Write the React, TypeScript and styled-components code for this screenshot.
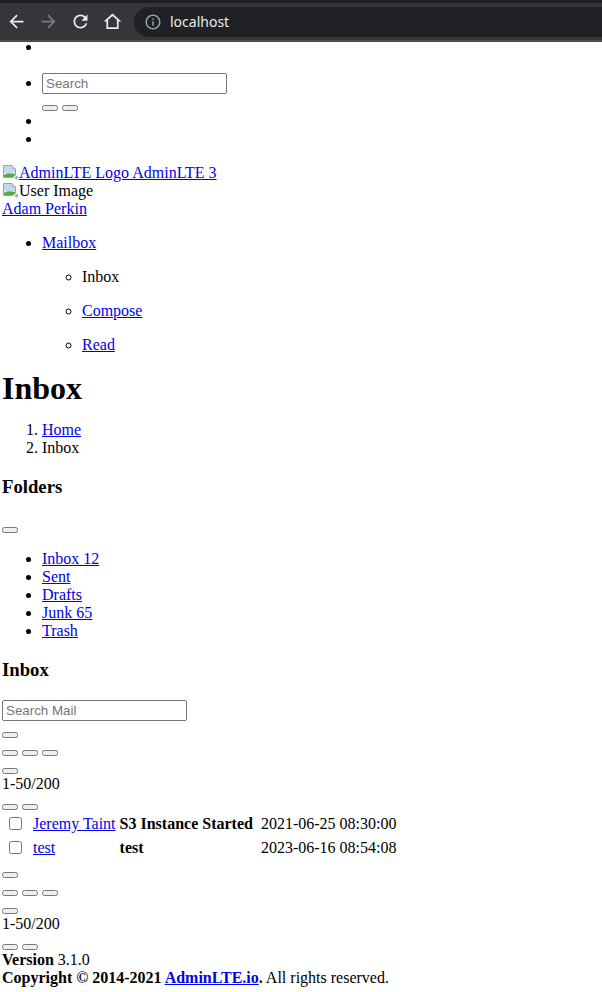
import React from "react";
import styled, { createGlobalStyle } from "styled-components";

const GlobalStyle = createGlobalStyle`
  html, body { margin: 0; padding: 0; background: #ffffff; }
  body {
    font-family: "Liberation Serif", "Times New Roman", serif;
    font-size: 16px;
    color: #000000;
    overflow: hidden;
  }
`;

const Shell = styled.div`
  display: flex;
  flex-direction: column;
  width: 602px;
  height: 992px;
  overflow: hidden;
`;

/* ---------- browser chrome ---------- */
const ChromeFrame = styled.header`
  flex: none;
  background: #1e1f22;
  padding-top: 3px;
`;

const Toolbar = styled.div`
  height: 37px;
  background: #35363a;
  border-bottom: 2px solid #4a4c50;
  display: flex;
  align-items: center;
`;

const NavButton = styled.span<{ $dim?: boolean }>`
  flex: none;
  width: 32px;
  height: 32px;
  display: flex;
  align-items: center;
  justify-content: center;
  color: ${(p) => (p.$dim ? "#7a7b7e" : "#e8eaed")};
`;

const Omnibox = styled.div`
  flex: 1;
  margin-left: 6px;
  margin-right: -30px;
  height: 30px;
  border-radius: 15px;
  background: #202124;
  display: flex;
  align-items: center;
  gap: 8px;
  padding-left: 10px;
  font-family: "Noto Sans", "DejaVu Sans", sans-serif;
  font-size: 14px;
  color: #e8eaed;
`;

const InfoIcon = styled.span`
  display: flex;
  color: #9aa0a6;
`;

/* ---------- page ---------- */
const Viewport = styled.main`
  flex: 1;
  overflow: hidden;
`;

const Page = styled.div<{ $scroll: number }>`
  margin-top: ${(p) => -p.$scroll}px;
  padding: 0 2px;
`;

const Link = styled.a`
  color: #0000ee;
  text-decoration: underline;
  cursor: pointer;
`;

const BulletList = styled.ul<{ $gap?: number }>`
  margin: ${(p) => (p.$gap ?? 16)}px 0;
  padding-left: 40px;
  list-style: disc;
`;

const SubList = styled.ul`
  margin: 0;
  padding-left: 40px;
  list-style: circle;
`;

const EmptyItem = styled.li`
  height: 18px;
`;

const SearchItem = styled.li`
  padding-top: 17px;
`;

const TextInput = styled.input<{ $w: number }>`
  width: ${(p) => p.$w}px;
  box-sizing: border-box;
  font-family: "Liberation Sans", Arial, sans-serif;
  font-size: 13.333px;
  margin: 0;
`;

const Line = styled.div`
  line-height: normal;
`;

const Button = styled.button``;

const Brand = styled.div`
  line-height: normal;
`;

const AltImage = styled.span`
  display: inline;
`;

const BrokenIcon = styled.svg`
  width: 16px;
  height: 16px;
  margin-right: 1px;
  vertical-align: -2px;
`;

const MenuText = styled.p`
  margin: 16px 0;
`;

const PageTitle = styled.h1`
  font-size: 32px;
  font-weight: bold;
  margin: 16px 0 14px;
`;

const Crumbs = styled.ol`
  margin: 0 0 16px;
  padding-left: 40px;
`;

const CardTitle = styled.h3`
  font-size: 18.72px;
  font-weight: bold;
  margin: 18.72px 0;
`;

const MailTable = styled.table`
  border-spacing: 2px;
  border-collapse: separate;
`;

const Cell = styled.td`
  padding: 1px;
  white-space: nowrap;
`;

const Subject = styled.b``;

const Check = styled.input``;

const Footer = styled.footer`
  line-height: normal;
`;

/* ---------- icons ---------- */
const Broken = () => (
  <BrokenIcon viewBox="0 0 16 16" aria-hidden="true">
    <path d="M1.5 1.5 H10 L13.5 5 V11 L11 13.5 H1.5 Z" fill="#eef2f6" stroke="#a0a0a0" strokeWidth="1" />
    <path d="M10 1.5 V5 H13.5" fill="#dcdcdc" stroke="#a0a0a0" strokeWidth="1" />
    <path d="M2 2 H9.5 V5.5 H13 V9 L2 9 Z" fill="#c4d9ee" />
    <path d="M2 13 V11 C5 8.5 8.5 9 13 10 V11 L11 13 Z" fill="#53ad3f" />
    <path d="M12.5 14 L15.5 11.5 V14.5 H12.5 Z" fill="#5b8fd6" />
    <path d="M13.8 15.5 L15.5 14 V15.5 Z" fill="#53ad3f" />
  </BrokenIcon>
);

const BackIcon = () => (
  <svg width="21" height="21" viewBox="0 0 24 24" fill="currentColor">
    <path d="M20 11H7.83l5.59-5.59L12 4l-8 8 8 8 1.41-1.41L7.83 13H20v-2z" />
  </svg>
);
const ForwardIcon = () => (
  <svg width="21" height="21" viewBox="0 0 24 24" fill="currentColor">
    <path d="M12 4l-1.41 1.41L16.17 11H4v2h12.17l-5.58 5.59L12 20l8-8z" />
  </svg>
);
const ReloadIcon = () => (
  <svg width="21" height="21" viewBox="0 0 24 24" fill="currentColor">
    <path d="M17.65 6.35C16.2 4.9 14.21 4 12 4c-4.42 0-7.99 3.58-7.99 8s3.57 8 7.99 8c3.73 0 6.84-2.55 7.73-6h-2.08c-.82 2.33-3.04 4-5.65 4-3.31 0-6-2.69-6-6s2.69-6 6-6c1.66 0 3.14.69 4.22 1.78L13 11h7V4l-2.35 2.35z" />
  </svg>
);
const HomeIcon = () => (
  <svg width="21" height="21" viewBox="0 0 24 24" fill="none" stroke="currentColor" strokeWidth="2" strokeLinejoin="miter">
    <path d="M12 4.3 L19.5 11 H18 V19.5 H6 V11 H4.5 Z" />
  </svg>
);
const Info = () => (
  <svg width="18" height="18" viewBox="0 0 24 24" fill="currentColor">
    <path d="M11 7h2v2h-2zm0 4h2v6h-2zm1-9C6.48 2 2 6.48 2 12s4.48 10 10 10 10-4.48 10-10S17.52 2 12 2zm0 18c-4.41 0-8-3.59-8-8s3.59-8 8-8 8 3.59 8 8-3.59 8-8 8z" />
  </svg>
);

/* ---------- data ---------- */
const folders = ["Inbox 12", "Sent", "Drafts", "Junk 65", "Trash"];
const mails = [
  { from: "Jeremy Taint", subject: "S3 Instance Started", date: "2021-06-25 08:30:00" },
  { from: "test", subject: "test", date: "2023-06-16 08:54:08" },
];

const Controls = () => (
  <>
    <Line><Button /></Line>
    <Line><Button /> <Button /> <Button /></Line>
    <Line><Button /></Line>
    <Line>1-50/200</Line>
    <Line><Button /> <Button /></Line>
  </>
);

export default function App() {
  return (
    <Shell>
      <GlobalStyle />
      <ChromeFrame>
        <Toolbar>
          <NavButton><BackIcon /></NavButton>
          <NavButton $dim><ForwardIcon /></NavButton>
          <NavButton><ReloadIcon /></NavButton>
          <NavButton><HomeIcon /></NavButton>
          <Omnibox>
            <InfoIcon><Info /></InfoIcon>
            <span>localhost</span>
          </Omnibox>
        </Toolbar>
      </ChromeFrame>
      <Viewport>
        <Page $scroll={20}>
          <BulletList>
            <EmptyItem />
            <SearchItem>
              <Line><TextInput $w={185} placeholder="Search" /></Line>
              <Line><Button /> <Button /></Line>
            </SearchItem>
            <EmptyItem />
            <EmptyItem />
          </BulletList>

          <Brand>
            <Link><AltImage><Broken />AdminLTE Logo</AltImage> AdminLTE 3</Link>
          </Brand>
          <Brand><AltImage><Broken />User Image</AltImage></Brand>
          <Brand><Link>Adam Perkin</Link></Brand>

          <BulletList>
            <li>
              <MenuText><Link>Mailbox</Link></MenuText>
              <SubList>
                <li><MenuText>Inbox</MenuText></li>
                <li><MenuText><Link>Compose</Link></MenuText></li>
                <li><MenuText><Link>Read</Link></MenuText></li>
              </SubList>
            </li>
          </BulletList>

          <PageTitle>Inbox</PageTitle>
          <Crumbs>
            <li><Link>Home</Link></li>
            <li>Inbox</li>
          </Crumbs>

          <CardTitle>Folders</CardTitle>
          <Line><Button /></Line>
          <BulletList>
            {folders.map((f) => (
              <li key={f}><Link>{f}</Link></li>
            ))}
          </BulletList>

          <CardTitle>Inbox</CardTitle>
          <Line><TextInput $w={185} placeholder="Search Mail" /></Line>
          <Controls />
          <MailTable>
            <tbody>
              {mails.map((m) => (
                <tr key={m.date}>
                  <Cell><Check type="checkbox" /></Cell>
                  <Cell />
                  <Cell><Link>{m.from}</Link></Cell>
                  <Cell><Subject>{m.subject}</Subject></Cell>
                  <Cell />
                  <Cell>{m.date}</Cell>
                </tr>
              ))}
            </tbody>
          </MailTable>
          <Controls />
          <Footer>
            <div><b>Version</b> 3.1.0</div>
            <strong>Copyright © 2014-2021 <Link>AdminLTE.io</Link>.</strong> All rights reserved.
          </Footer>
        </Page>
      </Viewport>
    </Shell>
  );
}
